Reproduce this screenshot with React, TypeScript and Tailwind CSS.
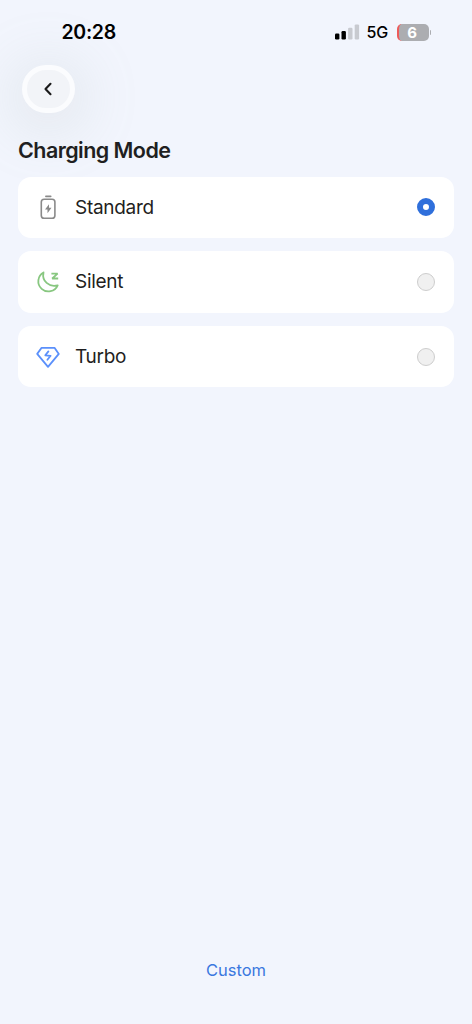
import { FC, useState } from "react";

const BatteryIcon: FC = () => (
  <svg width="24" height="26" viewBox="0 0 24 26" fill="none">
    <path d="M9.9 2.3h4.8" stroke="#8a8a8a" strokeWidth="1.7" strokeLinecap="round" />
    <rect x="5.3" y="5.2" width="13.6" height="19" rx="2.8" stroke="#8a8a8a" strokeWidth="1.6" />
    <path d="M13 10.2 9 15.5h2.5v3.7l4-5.4H13z" fill="#8a8a8a" />
  </svg>
);

const MoonIcon: FC = () => (
  <svg width="24" height="24" viewBox="0 0 24 24" fill="none" stroke="#88c780" strokeWidth="1.8" strokeLinejoin="round" strokeLinecap="round">
    <path d="M7.5 2.5A10.1 10.1 0 1 0 21.7 15.3C13 17.6 5.6 11 7.5 2.5Z" />
    <path d="M15.4 3.6h6.2l-5.4 4.9h6" strokeLinejoin="bevel" strokeLinecap="butt" />
  </svg>
);

const DiamondIcon: FC = () => (
  <svg width="24" height="24" viewBox="0 0 24 24" fill="none" stroke="#5b90fb" strokeWidth="1.8" strokeLinejoin="round" strokeLinecap="round">
    <path d="M5.6 2.8h12.9l4.3 6.1L12 21.8 1.2 8.9z" />
    <path d="M12.4 6.4 9.3 10.3l5.3.5-3.2 3.9" />
  </svg>
);

const modes = [
  { id: "standard", label: "Standard", icon: <BatteryIcon /> },
  { id: "silent", label: "Silent", icon: <MoonIcon /> },
  { id: "turbo", label: "Turbo", icon: <DiamondIcon /> },
];

const StatusBar: FC = () => (
  <div className="flex h-[64.5px] items-center justify-between pl-[61.5px] pr-[41px] text-black">
    <span className="text-[19.5px] leading-6 font-semibold tracking-[-0.3px]">20:28</span>
    <div className="flex items-center">
      <svg width="25" height="16" viewBox="0 0 25 16">
        <rect x="0" y="9.6" width="4.4" height="5.8" rx="1.2" fill="#000" />
        <rect x="6.5" y="7" width="4.4" height="8.4" rx="1.2" fill="#000" />
        <rect x="13.1" y="3.8" width="4.4" height="11.6" rx="1.2" fill="#c8cad0" />
        <rect x="19.7" y="0.4" width="4.4" height="15" rx="1.2" fill="#c8cad0" />
      </svg>
      <span className="ml-[7px] w-[23px] text-[16px] leading-5 font-medium tracking-[-0.2px]">5G</span>
      {/* Battery level */}
      <div className="ml-[7px] flex h-[17px] w-8 items-center justify-center rounded-[5px] border-l-2 border-[#ee5a5a] bg-[#acadb1] pr-[3px] text-[15px] leading-[17px] font-bold text-white">
        6
      </div>
      <div className="ml-px h-[5px] w-[1.5px] rounded-r bg-[#acadb1]" />
    </div>
  </div>
);

const App: FC = () => {
  const [selected, setSelected] = useState("standard");

  return (
    <div className="flex h-screen flex-col overflow-hidden bg-[#f2f5fd] font-['Inter',sans-serif] text-[#1f1f21]">
      <StatusBar />

      <button
        aria-label="Back"
        className="ml-[22px] grid h-[48.5px] w-[53px] shrink-0 place-items-center rounded-full border-[5px] border-[#fbfcfe] bg-[#f2f4f8] shadow-[0_8px_56px_12px_rgba(155,170,160,0.17)]"
      >
        <svg className="mr-0.5" width="10" height="14" viewBox="0 0 10 14" fill="none">
          <path d="M7.5 1.8 2.5 7 7.5 12.2" stroke="#1a1a1a" strokeWidth="2.1" strokeLinecap="round" strokeLinejoin="round" />
        </svg>
      </button>

      <main className="px-[18px] pt-[22.5px]">
        <h1 className="text-[21.5px] leading-7 font-semibold tracking-[-0.55px]">Charging Mode</h1>
        <div className="mt-[13px] flex flex-col gap-[13.2px]">
          {modes.map((mode) => (
            <button
              key={mode.id}
              onClick={() => setSelected(mode.id)}
              className="flex h-[61.5px] items-center rounded-[13px] bg-white pl-[18px] pr-[19px] text-left"
            >
              <span className="grid w-6 place-items-center">{mode.icon}</span>
              <span className="ml-[15px] flex-1 pt-px text-[19px] tracking-[-0.3px]">{mode.label}</span>
              {selected === mode.id ? (
                <span className="size-[18px] rounded-full border-6 border-[#2f6fdb] bg-white" />
              ) : (
                <span className="size-[18px] rounded-full border border-[#cdcdcd] bg-[#f0f0f0]" />
              )}
            </button>
          ))}
        </div>
      </main>

      <button className="mt-auto mb-[42px] self-center text-[16.5px] leading-6 tracking-[-0.05px] text-[#3b78df]">
        Custom
      </button>
    </div>
  );
};

export default App;
